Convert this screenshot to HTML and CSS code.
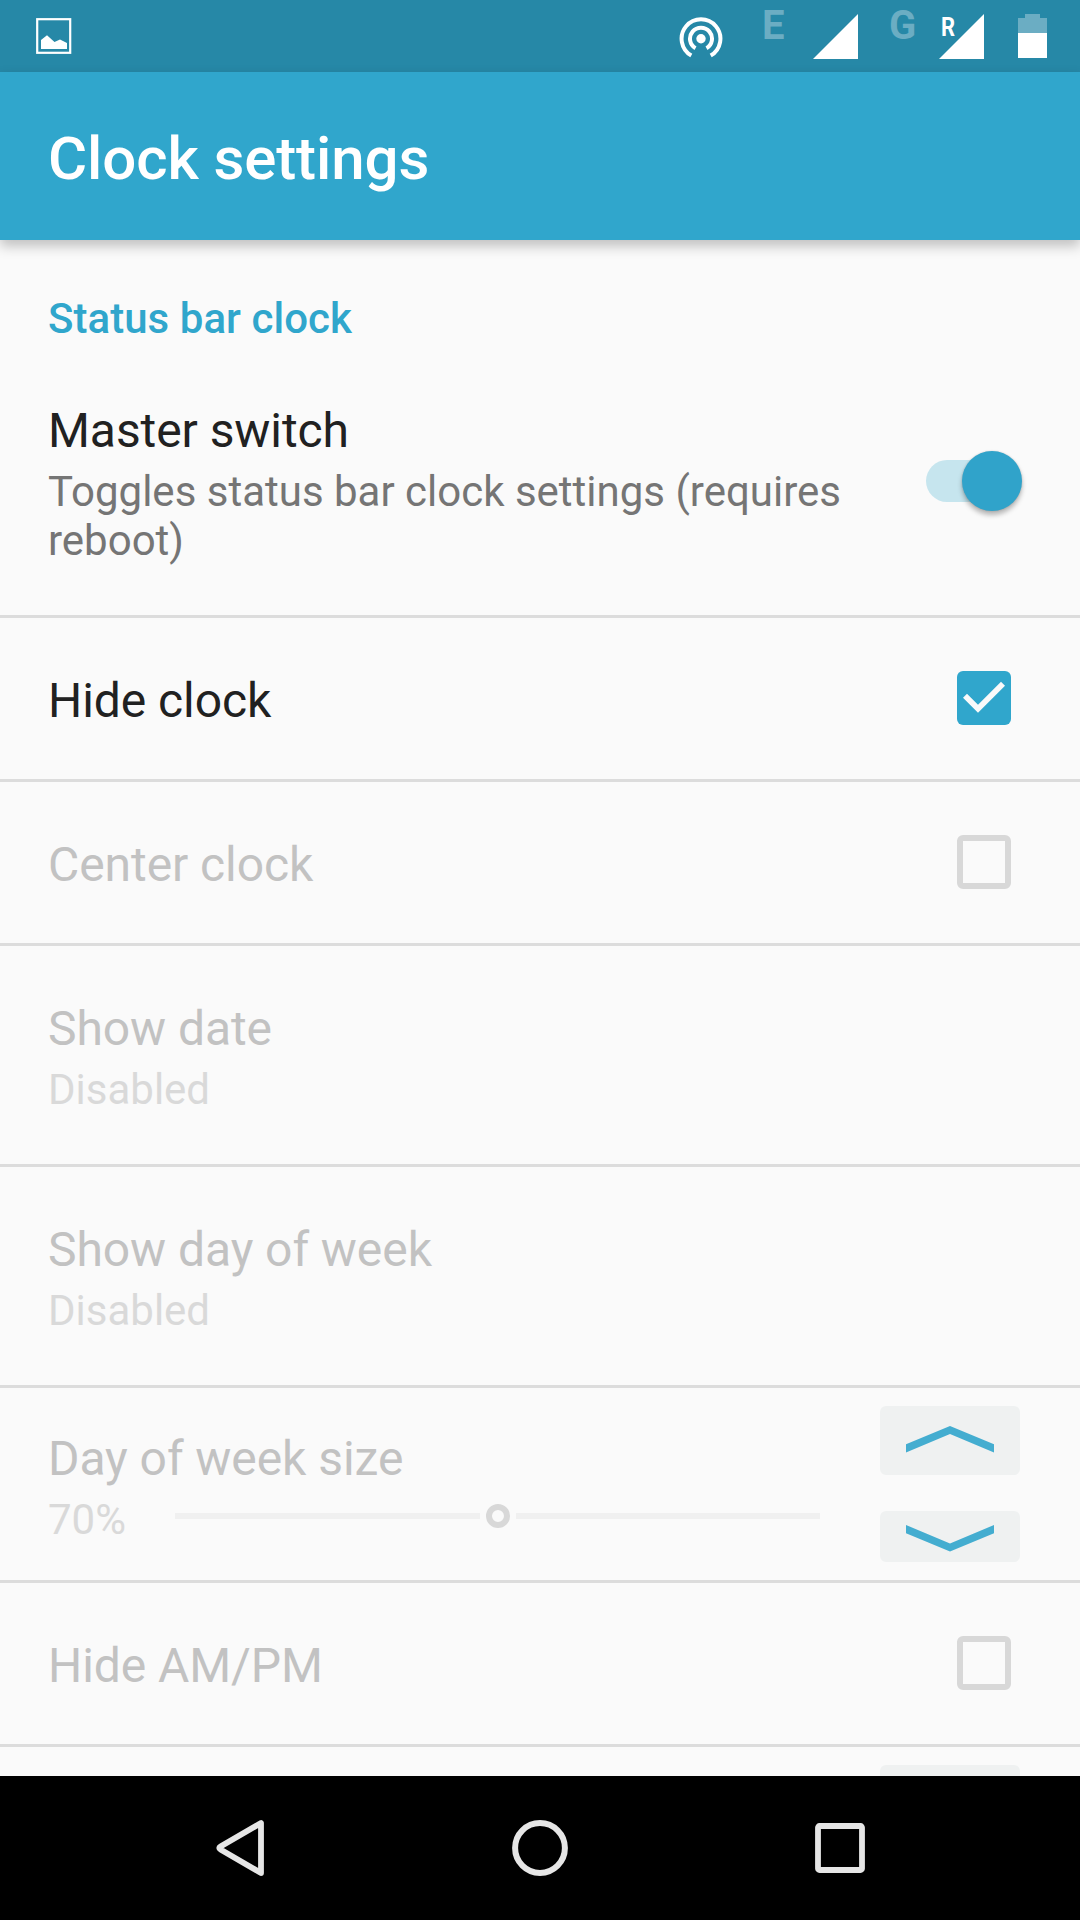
FILE: index.html
```html
<!DOCTYPE html>
<html lang="en">
<head>
<meta charset="utf-8">
<title>Clock settings</title>
<link rel="stylesheet" href="styles.css">
</head>
<body>
<div class="screen">
  <div class="status-bar">
    <svg class="icon-image" width="36" height="36" viewBox="0 0 36 36"><rect x="1.2" y="1.2" width="33" height="33.6" fill="none" stroke="#fff" stroke-width="2.2"/><path d="M5 31V22L11 17.3L18.5 24L24 21.5L31 25V31Z" fill="#fff"/></svg>
    <div class="status-icons">
      <svg class="icon-hotspot" width="44" height="44" viewBox="0 0 44 44"><circle cx="22" cy="21.7" r="4.7" fill="#fff"/><path d="M16.5 31.2A11 11 0 1 1 27.5 31.2M12.3 38.5A19.4 19.4 0 1 1 31.7 38.5" fill="none" stroke="#fff" stroke-width="4"/></svg>
      <span class="network network-e">E</span>
      <svg class="signal signal-first" width="45" height="45" viewBox="0 0 45 45"><path d="M45 0V45H0Z" fill="#fff"/></svg>
      <span class="network network-g">G</span>
      <div class="signal-wrap">
        <svg class="signal" width="45" height="45" viewBox="0 0 45 45"><path d="M45 0V45H0Z" fill="#fff"/></svg>
        <span class="roaming">R</span>
      </div>
      <svg class="icon-battery" width="29" height="44" viewBox="0 0 29 44"><path d="M0 4H7V0H22V4H29V19H0Z" fill="#6badc3"/><path d="M0 19H29V44H0Z" fill="#fff"/></svg>
    </div>
  </div>
  <header class="app-bar"><h1 class="app-title">Clock settings</h1></header>
  <main class="settings">
    <h2 class="section-title">Status bar clock</h2>
    <div class="row row-master">
      <div class="row-text">
        <div class="title">Master switch</div>
        <div class="summary">Toggles status bar clock settings (requires reboot)</div>
      </div>
      <div class="switch"><div class="switch-thumb"></div></div>
    </div>
    <div class="row row-single">
      <div class="title">Hide clock</div>
      <div class="checkbox checked"><svg width="54" height="54" viewBox="0 0 54 54"><path d="M6 26.7L10 22.7L21 33.7L44 10.7L48 14.7L21 41.7Z" fill="#fafafa"/></svg></div>
    </div>
    <div class="row row-single disabled">
      <div class="title">Center clock</div>
      <div class="checkbox"></div>
    </div>
    <div class="row row-double disabled">
      <div class="row-text">
        <div class="title">Show date</div>
        <div class="summary">Disabled</div>
      </div>
    </div>
    <div class="row row-double disabled">
      <div class="row-text">
        <div class="title">Show day of week</div>
        <div class="summary">Disabled</div>
      </div>
    </div>
    <div class="row row-slider disabled">
      <div class="slider-text">
        <div class="title">Day of week size</div>
        <div class="slider-line">
          <div class="summary value">70%</div>
          <div class="slider"><div class="track"></div><div class="thumb"></div><div class="track"></div></div>
        </div>
      </div>
      <div class="stepper">
        <div class="step step-up"><svg width="88" height="27" viewBox="0 0 88 27"><path d="M0 18.3L44 0L88 18.3V26.5L44 8L0 26.5Z" fill="#44add0"/></svg></div>
        <div class="step step-down"><svg width="88" height="27" viewBox="0 0 88 27"><path d="M0 0L44 18.5L88 0V8.2L44 26.5L0 8.2Z" fill="#44add0"/></svg></div>
      </div>
    </div>
    <div class="row row-single disabled">
      <div class="title">Hide AM/PM</div>
      <div class="checkbox"></div>
    </div>
    <div class="row row-partial"><div class="step step-up"></div></div>
  </main>
  <nav class="nav-bar">
    <svg width="60" height="60" viewBox="0 0 60 60"><path d="M51 5V55L10.5 31.5Q8 30 10.5 28.5Z" fill="none" stroke="#e6e6e6" stroke-width="5.8" stroke-linejoin="round"/></svg>
    <svg width="60" height="60" viewBox="0 0 60 60"><circle cx="30" cy="30" r="24.9" fill="none" stroke="#e6e6e6" stroke-width="6"/></svg>
    <svg width="60" height="60" viewBox="0 0 60 60"><rect x="8" y="8" width="44" height="44" rx="1.5" fill="none" stroke="#e6e6e6" stroke-width="5.8"/></svg>
  </nav>
</div>
</body>
</html>
```

FILE: styles.css
```css
* { box-sizing: border-box; }
body { margin: 0; background: #fafafa; font-family: Roboto, sans-serif; }
svg { display: block; flex: none; }
h1, h2 { margin: 0; }

.screen { width: 1080px; height: 1920px; display: flex; flex-direction: column; overflow: hidden; }

.status-bar { flex: none; height: 72px; background: #2688a7; display: flex; justify-content: space-between; padding: 0 33px 0 36px; }
.icon-image { margin-top: 18px; }
.status-icons { display: flex; align-items: flex-start; }
.icon-hotspot { margin-top: 17px; }
.network { color: #6badc3; font-size: 40px; font-weight: 700; line-height: 46px; margin-top: 3px; }
.network-e { width: 51px; margin-left: 39px; }
.network-g { width: 50px; margin-left: 31px; }
.signal { margin-top: 14px; }
.signal-wrap { position: relative; }
.roaming { position: absolute; left: 2px; top: 12px; color: #fff; font-size: 25.5px; font-weight: 700; line-height: 30px; transform: scaleX(.86); transform-origin: left; }
.icon-battery { margin: 14px 0 0 34px; }

.app-bar { flex: none; height: 168px; background: #30a6cc; padding: 52px 48px 0; position: relative; box-shadow: 0 6px 12px rgba(0, 0, 0, .24); }
.app-title { color: #fff; font-size: 60px; font-weight: 500; line-height: 70px; letter-spacing: -.1px; }

.settings { flex: 1; min-height: 0; overflow: hidden; }
.section-title { height: 108px; padding: 54px 48px 0; color: #30a6cc; font-size: 42px; font-weight: 500; line-height: 49px; letter-spacing: .04px; }

.row { display: flex; justify-content: space-between; align-items: flex-start; padding: 54px 48px 0; border-bottom: 3px solid #dcdcdc; }
.row-master { height: 270px; }
.row-single { height: 164px; padding-right: 69px; }
.row-double { height: 221px; }
.row-slider { height: 195px; padding: 0 60px 0 48px; }
.row-partial { height: 195px; padding: 18px 60px 0; justify-content: flex-end; }
.title { color: #212121; font-size: 48px; line-height: 57px; letter-spacing: -.07px; white-space: nowrap; }
.summary { color: #757575; font-size: 42px; line-height: 49px; padding-top: 8px; }
.row-master .summary { width: 840px; }
.disabled .title { color: #c2c2c2; }
.disabled .summary { color: #d9d9d9; }

.checkbox { width: 54px; height: 54px; margin-top: -1px; border: 6px solid #d8d8d8; border-radius: 6px; }
.checked { border: 0; background: #30a6cc; }

.switch { flex: none; width: 96px; height: 42px; margin: 58px 10px 0 0; background: linear-gradient(90deg, #c6e5ee 66px, transparent 66px); border-radius: 21px; position: relative; }
.switch-thumb { position: absolute; left: 35.5px; top: -9px; width: 60px; height: 60px; border-radius: 50%; background: #30a3ca; box-shadow: 0 4px 5px rgba(0, 0, 0, .28), 0 0 2px rgba(0, 0, 0, .16); }

.slider-text { width: 772px; padding-top: 42px; }
.slider-line { display: flex; align-items: flex-start; }
.value { width: 127px; }
.slider { flex: 1; display: flex; align-items: center; gap: 6px; height: 24px; margin-top: 17px; }
.track { height: 6px; background: #f0f0f0; width: 305px; }
.track:last-child { width: 304px; }
.thumb { width: 24px; height: 24px; border: 6px solid #d8d8d8; border-radius: 50%; }
.stepper { padding-top: 18px; display: flex; flex-direction: column; gap: 36px; }
.step { width: 140px; background: #eff1f1; border-radius: 6px; display: flex; justify-content: center; align-items: flex-start; }
.step-up { height: 69px; padding-top: 19.5px; }
.step-down { height: 51px; padding-top: 14px; }

.nav-bar { flex: none; height: 144px; background: #000; display: flex; justify-content: space-between; align-items: center; padding: 0 210px; position: relative; }
```
